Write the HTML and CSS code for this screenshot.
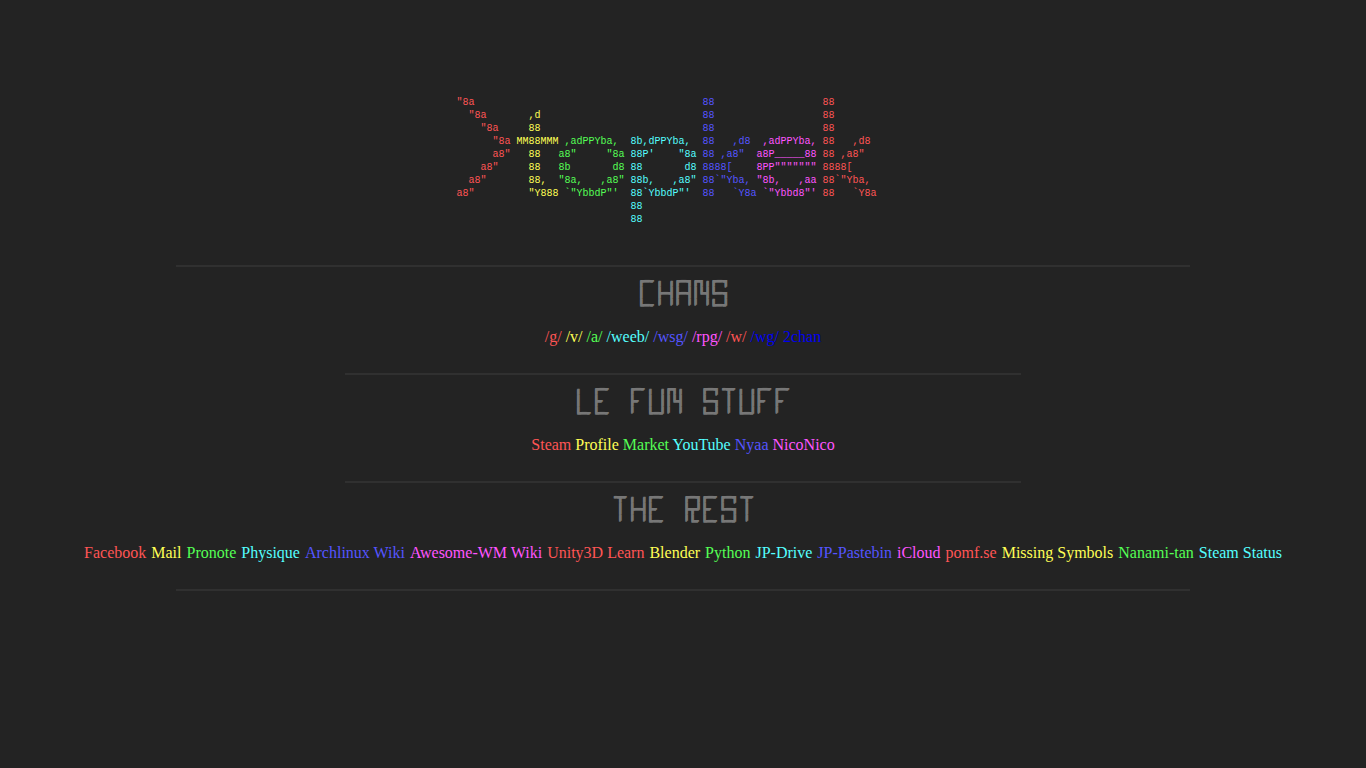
FILE: index.html
```
<!DOCTYPE html>
<html lang="en">
<head>
<meta charset="utf-8">
<title>Startpage</title>
<link rel="stylesheet" href="styles.css">
</head>
<body>
<header class="banner">
<pre class="art"><span class="red">"8a</span>                                      <span class="blue">88</span>                  <span class="red">88</span>
  <span class="red">"8a</span>       <span class="yellow">,d</span>                           <span class="blue">88</span>                  <span class="red">88</span>
    <span class="red">"8a</span>     <span class="yellow">88</span>                           <span class="blue">88</span>                  <span class="red">88</span>
      <span class="red">"8a</span> <span class="yellow">MM88MMM</span> <span class="green">,adPPYba,</span>  <span class="cyan">8b,dPPYba,</span>  <span class="blue">88   ,d8</span>  <span class="magenta">,adPPYba,</span> <span class="red">88   ,d8</span>
      <span class="red">a8"</span>   <span class="yellow">88</span>   <span class="green">a8"     "8a</span> <span class="cyan">88P'    "8a</span> <span class="blue">88 ,a8"</span>  <span class="magenta">a8P_____88</span> <span class="red">88 ,a8"</span>
    <span class="red">a8"</span>     <span class="yellow">88</span>   <span class="green">8b       d8</span> <span class="cyan">88       d8</span> <span class="blue">8888[</span>    <span class="magenta">8PP"""""""</span> <span class="red">8888[</span>
  <span class="red">a8"</span>       <span class="yellow">88,</span>  <span class="green">"8a,   ,a8"</span> <span class="cyan">88b,   ,a8"</span> <span class="blue">88`"Yba,</span> <span class="magenta">"8b,   ,aa</span> <span class="red">88`"Yba,</span>
<span class="red">a8"</span>         <span class="yellow">"Y888</span> <span class="green">`"YbbdP"'</span>  <span class="cyan">88`YbbdP"'</span>  <span class="blue">88   `Y8a</span> <span class="magenta">`"Ybbd8"'</span> <span class="red">88   `Y8a</span>
                             <span class="cyan">88</span>
                             <span class="cyan">88</span></pre>
</header>
<main>
<hr class="rule wide">
<section class="group">
<h2 class="title" aria-label="Chans">┏━╸╻ ╻┏━┓┏┓╻┏━┓
┃  ┣━┫┣━┫┃┗┫┗━┓
┗━╸╹ ╹╹ ╹╹ ╹┗━┛</h2>
<nav class="links" aria-label="Chans">
<a class="red" href="#g">/g/</a>
<a class="yellow" href="#v">/v/</a>
<a class="green" href="#a">/a/</a>
<a class="cyan" href="#weeb">/weeb/</a>
<a class="blue" href="#wsg">/wsg/</a>
<a class="magenta" href="#rpg">/rpg/</a>
<a class="red" href="#w">/w/</a>
<a class="plain" href="#wg">/wg/</a>
<a class="plain" href="#2chan">2chan</a>
</nav>
</section>
<hr class="rule">
<section class="group">
<h2 class="title" aria-label="Le fun stuff">╻  ┏━╸   ┏━╸╻ ╻┏┓╻   ┏━┓╺┳╸╻ ╻┏━╸┏━╸
┃  ┣╸    ┣╸ ┃ ┃┃┗┫   ┗━┓ ┃ ┃ ┃┣╸ ┣╸ 
┗━╸┗━╸   ╹  ┗━┛╹ ╹   ┗━┛ ╹ ┗━┛╹  ╹  </h2>
<nav class="links" aria-label="Le fun stuff">
<a class="red" href="#steam">Steam</a>
<a class="yellow" href="#profile">Profile</a>
<a class="green" href="#market">Market</a>
<a class="cyan" href="#youtube">YouTube</a>
<a class="blue" href="#nyaa">Nyaa</a>
<a class="magenta" href="#niconico">NicoNico</a>
</nav>
</section>
<hr class="rule">
<section class="group">
<h2 class="title" aria-label="The rest">╺┳╸╻ ╻┏━╸   ┏━┓┏━╸┏━┓╺┳╸
 ┃ ┣━┫┣╸    ┣┳┛┣╸ ┗━┓ ┃ 
 ╹ ╹ ╹┗━╸   ╹┗╸┗━╸┗━┛ ╹ </h2>
<nav class="links spread" aria-label="The rest">
<a class="red" href="#facebook">Facebook</a>
<a class="yellow" href="#mail">Mail</a>
<a class="green" href="#pronote">Pronote</a>
<a class="cyan" href="#physique">Physique</a>
<a class="blue" href="#archwiki">Archlinux Wiki</a>
<a class="magenta" href="#awesome">Awesome-WM Wiki</a>
<a class="red" href="#unity">Unity3D Learn</a>
<a class="yellow" href="#blender">Blender</a>
<a class="green" href="#python">Python</a>
<a class="cyan" href="#jpdrive">JP-Drive</a>
<a class="blue" href="#jppastebin">JP-Pastebin</a>
<a class="magenta" href="#icloud">iCloud</a>
<a class="red" href="#pomf">pomf.se</a>
<a class="yellow" href="#symbols">Missing Symbols</a>
<a class="green" href="#nanami">Nanami-tan</a>
<a class="cyan" href="#status">Steam Status</a>
</nav>
</section>
<hr class="rule wide">
</main>
</body>
</html>
```
FILE: styles.css
```
body {
  margin: 0;
  padding: 96px 7px 0;
  background: #232323;
  font: 16px/18px "Liberation Serif", "Times New Roman", serif;
  text-align: center;
}

.banner {
  display: flex;
  justify-content: center;
  padding-bottom: 39px;
}

.art {
  margin: 0;
  padding-right: 33px;
  font: 10px/13px "Liberation Mono", "Courier New", monospace;
  text-align: left;
}

.rule {
  width: 50%;
  height: 2px;
  margin: 0 auto;
  border: 0;
  background: #303030;
}

.rule.wide {
  width: 75%;
}

.group {
  display: flex;
  flex-direction: column;
  align-items: center;
  gap: 17px;
  padding: 8px 0 27px;
}

.title {
  margin: 0;
  color: #777777;
  font: bold 10px/12px "DejaVu Sans Mono", monospace;
  text-align: left;
  text-shadow: 1px 0 #777777, 0 1px #777777;
  white-space: pre;
}

.links a {
  text-decoration: none;
}

.links.spread {
  display: flex;
  flex-wrap: wrap;
  justify-content: center;
  column-gap: 5px;
}

.red { color: #ff5555; }
.yellow { color: #ffff55; }
.green { color: #55ff55; }
.cyan { color: #55ffff; }
.blue { color: #5555ff; }
.magenta { color: #ff55ff; }
.plain { color: #0000ee; }
```
